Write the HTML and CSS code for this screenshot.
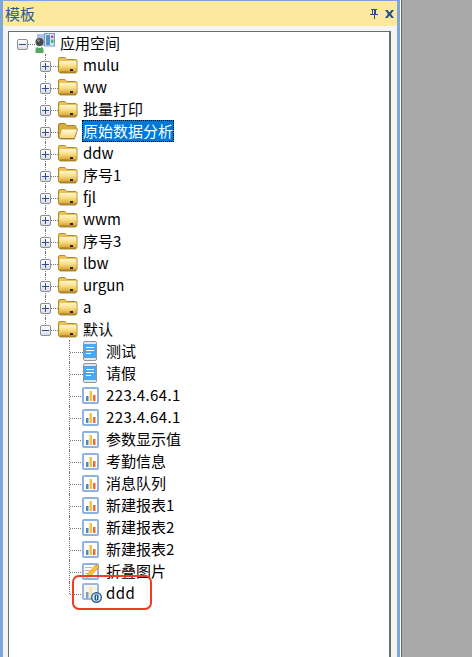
FILE: index.html
```html
<!DOCTYPE html>
<html lang="zh">
<head>
  <title>模板</title>
  <meta charset="utf-8">
  <link rel="stylesheet" href="styles.css">
</head>
<body>

<svg class="defs" width="0" height="0">
  <defs>
    <linearGradient id="gold" x1="0" y1="0" x2="0" y2="1">
      <stop offset="0" stop-color="#fff7cf"/>
      <stop offset="0.45" stop-color="#f9de85"/>
      <stop offset="1" stop-color="#d9a234"/>
    </linearGradient>
    <linearGradient id="goldopen" x1="0" y1="0" x2="0" y2="1">
      <stop offset="0" stop-color="#fffbe2"/>
      <stop offset="1" stop-color="#f6d677"/>
    </linearGradient>
    <symbol id="folder" viewBox="0 0 20 17">
      <path d="M0.500 14V2q0-1.500 1.500-1.500h5l2 2h8.500q1.500 0 1.500 1.500v10q0 1.500-1.500 1.500H2q-1.500 0-1.500-1.500z" fill="#e8c25a" stroke="#b58a22"/>
      <rect x="1.500" y="4" width="17" height="11" rx="1" fill="url(#gold)"/>
      <rect x="1.500" y="14.500" width="17" height="1" fill="#a97d1c"/>
      <rect x="12" y="12" width="3" height="2" fill="#2e2408"/>
      <rect x="2" y="16" width="16" height="1" fill="#c8c8c8"/>
    </symbol>
    <symbol id="folderopen" viewBox="0 0 20 17">
      <path d="M0.500 15V2q0-1.500 1.500-1.500h5l2 2h7.500q1.500 0 1.500 1.500v2h1.500l-3 9.500H2z" fill="#d9ad3d" stroke="#a97d1c"/>
      <path d="M4 6.500h15L16 15H1.500z" fill="url(#goldopen)"/>
      <rect x="2" y="16" width="15" height="1" fill="#c8c8c8"/>
    </symbol>
    <symbol id="workspace" viewBox="0 0 20 20">
      <rect x="2" y="1" width="9" height="12" fill="#a9c3e6"/>
      <rect x="9.500" y="0.500" width="10" height="12.500" fill="#dbe5f2" stroke="#7f9ac0"/>
      <rect x="11" y="2" width="4" height="10" fill="#4f93c8"/>
      <rect x="16" y="2.500" width="2.500" height="2.500" fill="#d04a9a"/>
      <rect x="16" y="6.500" width="2.500" height="3.500" fill="#3fb56a"/>
      <circle cx="4.500" cy="9" r="4" fill="#4a4a4a"/>
      <circle cx="3.500" cy="7.500" r="1.300" fill="#9a9a9a"/>
      <path d="M0.500 20v-3q0-3 3-3h2q3 0 3 3v3z" fill="#58a95f"/>
      <rect x="3" y="13" width="3" height="2" fill="#dcebd4"/>
    </symbol>
    <symbol id="phone" viewBox="0 0 14 20">
      <rect x="0.500" y="0.500" width="13" height="19" rx="1.500" fill="#e3e6ea" stroke="#8d949c"/>
      <rect x="1" y="3" width="12" height="14" fill="#4aa8f0"/>
      <rect x="3" y="6" width="8" height="1" fill="#fff"/>
      <rect x="3" y="9" width="8" height="1" fill="#fff"/>
      <rect x="3" y="12" width="5" height="1" fill="#fff"/>
    </symbol>
    <symbol id="chart" viewBox="0 0 17 17">
      <rect x="1" y="1" width="15" height="15" rx="1" fill="#fff" stroke="#8fb2e6" stroke-width="2"/>
      <rect x="4" y="9" width="2.500" height="5" fill="#4f86c6"/>
      <rect x="7.500" y="4" width="2.500" height="10" fill="#f3c13a"/>
      <rect x="11" y="8" width="2.500" height="6" fill="#ea6a3a"/>
    </symbol>
    <symbol id="pencil" viewBox="0 0 17 17">
      <rect x="1" y="1" width="15" height="15" rx="1" fill="#fff" stroke="#8fb2e6" stroke-width="2"/>
      <rect x="3" y="4" width="7" height="1" fill="#b8b8b8"/>
      <rect x="3" y="7" width="5" height="1" fill="#b8b8b8"/>
      <rect x="3" y="10" width="3" height="1" fill="#b8b8b8"/>
      <path d="M4 15l1.500-4L14 1.500 17 4l-8.500 9z" fill="#f6c22e" stroke="#d98a1c" stroke-width="0.700"/>
      <path d="M4 15l1.500-4 3 2z" fill="#f0dcb4"/>
    </symbol>
    <symbol id="chartbadge" viewBox="0 0 20 20">
      <rect x="1" y="1" width="15" height="15" rx="1" fill="#f4f4f0" stroke="#9db6da" stroke-width="2"/>
      <rect x="4" y="9" width="2.500" height="6" fill="#7f9cc4"/>
      <rect x="7.500" y="4" width="2.500" height="11" fill="#f6e6a0"/>
      <circle cx="14.500" cy="14.500" r="4.800" fill="#e8f0f8" stroke="#2f5f8f" stroke-width="1.400"/>
      <rect x="12.500" y="11.500" width="4" height="6" rx="1" fill="#1c5a96"/>
      <rect x="14" y="12.500" width="1" height="4" fill="#d8e8f8"/>
    </symbol>
  </defs>
</svg>

<div class="panel">
  <div class="titlebar">
    <span class="titlebar-text">模板</span>
    <svg class="pin" width="8" height="10" viewBox="0 0 8 10">
      <path d="M1 0h6v1H6v4h2v1H5v4H4V6H0V5h2V1H1zM3 1v4h1V1z" fill="#1f4f96"/>
    </svg>
    <svg class="close" width="9" height="8" viewBox="0 0 9 8">
      <path d="M0 0h2.500L4.500 2.500 6.500 0H9L6 4l3 4H6.500l-2-2.500L2.500 8H0l3-4z" fill="#1f4f96"/>
    </svg>
  </div>

  <div class="frame">
    <ul class="tree">
      <li class="root">
        <div class="row">
          <span class="box minus"></span>
          <svg class="icon big"><use href="#workspace"/></svg>
          <span class="label">应用空间</span>
        </div>
        <ul class="branch">
          <li><div class="row"><span class="box plus"></span><svg class="icon folder"><use href="#folder"/></svg><span class="label">mulu</span></div></li>
          <li><div class="row"><span class="box plus"></span><svg class="icon folder"><use href="#folder"/></svg><span class="label">ww</span></div></li>
          <li><div class="row"><span class="box plus"></span><svg class="icon folder"><use href="#folder"/></svg><span class="label">批量打印</span></div></li>
          <li><div class="row"><span class="box plus"></span><svg class="icon folder"><use href="#folderopen"/></svg><span class="label selected">原始数据分析</span></div></li>
          <li><div class="row"><span class="box plus"></span><svg class="icon folder"><use href="#folder"/></svg><span class="label">ddw</span></div></li>
          <li><div class="row"><span class="box plus"></span><svg class="icon folder"><use href="#folder"/></svg><span class="label">序号1</span></div></li>
          <li><div class="row"><span class="box plus"></span><svg class="icon folder"><use href="#folder"/></svg><span class="label">fjl</span></div></li>
          <li><div class="row"><span class="box plus"></span><svg class="icon folder"><use href="#folder"/></svg><span class="label">wwm</span></div></li>
          <li><div class="row"><span class="box plus"></span><svg class="icon folder"><use href="#folder"/></svg><span class="label">序号3</span></div></li>
          <li><div class="row"><span class="box plus"></span><svg class="icon folder"><use href="#folder"/></svg><span class="label">lbw</span></div></li>
          <li><div class="row"><span class="box plus"></span><svg class="icon folder"><use href="#folder"/></svg><span class="label">urgun</span></div></li>
          <li><div class="row"><span class="box plus"></span><svg class="icon folder"><use href="#folder"/></svg><span class="label">a</span></div></li>
          <li>
            <div class="row"><span class="box minus"></span><svg class="icon folder"><use href="#folder"/></svg><span class="label">默认</span></div>
            <ul class="branch leaves">
              <li><div class="row"><svg class="icon phone"><use href="#phone"/></svg><span class="label">测试</span></div></li>
              <li><div class="row"><svg class="icon phone"><use href="#phone"/></svg><span class="label">请假</span></div></li>
              <li><div class="row"><svg class="icon chart"><use href="#chart"/></svg><span class="label wide">223.4.64.1</span></div></li>
              <li><div class="row"><svg class="icon chart"><use href="#chart"/></svg><span class="label wide">223.4.64.1</span></div></li>
              <li><div class="row"><svg class="icon chart"><use href="#chart"/></svg><span class="label">参数显示值</span></div></li>
              <li><div class="row"><svg class="icon chart"><use href="#chart"/></svg><span class="label">考勤信息</span></div></li>
              <li><div class="row"><svg class="icon chart"><use href="#chart"/></svg><span class="label">消息队列</span></div></li>
              <li><div class="row"><svg class="icon chart"><use href="#chart"/></svg><span class="label">新建报表1</span></div></li>
              <li><div class="row"><svg class="icon chart"><use href="#chart"/></svg><span class="label">新建报表2</span></div></li>
              <li><div class="row"><svg class="icon chart"><use href="#chart"/></svg><span class="label">新建报表2</span></div></li>
              <li><div class="row"><svg class="icon chart"><use href="#pencil"/></svg><span class="label">折叠图片</span></div></li>
              <li><div class="row"><svg class="icon badge"><use href="#chartbadge"/></svg><span class="label wide">ddd</span></div><span class="callout"></span></li>
            </ul>
          </li>
        </ul>
      </li>
    </ul>
  </div>
</div>

</body>
</html>
```

FILE: styles.css
```css
html, body {
    height: 100%;
}

body {
    margin: 0;
    background: #a9a9a9;
    color: #000;
    font-family: "Noto Sans CJK SC", "Noto Sans", sans-serif;
    font-size: 15px;
    overflow: hidden;
}

ul {
    list-style: none;
    margin: 0;
    padding: 0;
}

.defs {
    position: absolute;
}

.panel {
    width: 400px;
    height: 100%;
    box-sizing: border-box;
    display: flex;
    flex-direction: column;
    background: #f4f4f4;
    border-left: 3px solid #7ea6dc;
    border-right: 3px solid #7ea6dc;
    border-top: 1px solid #7ea6dc;
    box-shadow: 1px 0 0 #fff, 2px 0 0 #666;
}

.titlebar {
    height: 25px;
    flex: none;
    display: flex;
    align-items: center;
    gap: 7px;
    padding: 0 3px 0 2px;
    background: #fde99d;
    color: #1f5a96;
}

.titlebar-text {
    font-size: 15px;
    margin-right: auto;
}

.frame {
    flex: 1;
    margin: 5px 6px 0 5px;
    background: #fff;
    border: solid #6b6b6b;
    border-width: 1px 2px 0 1px;
    padding: 0 0 0 8px;
    position: relative;
}

.row {
    height: 22px;
    display: flex;
    align-items: center;
}

.box {
    width: 11px;
    height: 11px;
    box-sizing: border-box;
    flex: none;
    margin: 2px 7px 0 0;
    border: 1px solid #8a8f96;
    border-radius: 2px;
    background: linear-gradient(#fff, #d9dde3);
    position: relative;
    z-index: 1;
}

.box::before {
    content: "";
    position: absolute;
    left: 1px;
    top: 4px;
    width: 7px;
    height: 1px;
    background: #2f4f8f;
}

.plus::after {
    content: "";
    position: absolute;
    left: 4px;
    top: 1px;
    width: 1px;
    height: 7px;
    background: #2f4f8f;
}

.icon {
    flex: none;
    display: block;
    position: relative;
    z-index: 1;
}

.big {
    width: 20px;
    height: 20px;
    margin-right: 4px;
}

.folder {
    width: 20px;
    height: 17px;
    margin-right: 4px;
}

.phone {
    width: 14px;
    height: 20px;
    margin: 0 8px 0 19px;
}

.chart {
    width: 17px;
    height: 17px;
    margin: 0 6px 0 18px;
}

.badge {
    width: 20px;
    height: 20px;
    margin: 0 3px 0 18px;
}

.label {
    line-height: 20px;
    border: 1px dotted transparent;
    white-space: nowrap;
}

.wide {
    letter-spacing: 0.4px;
}

.selected {
    background: #0078d7;
    color: #fff;
    border-color: #e08a20;
    outline: 1px dotted #000;
    outline-offset: -1px;
}

.branch {
    padding-left: 23px;
}

.leaves {
    padding-left: 24px;
}

.branch > li {
    position: relative;
}

/* connector lines */
.branch > li::before {
    content: "";
    position: absolute;
    left: 5px;
    top: 0;
    bottom: 0;
    border-left: 1px dotted #777;
}

.branch > li:last-child::before {
    bottom: auto;
    height: 12px;
}

.branch > li::after {
    content: "";
    position: absolute;
    left: 6px;
    top: 12px;
    width: 12px;
    border-top: 1px dotted #777;
}

.leaves > li::after {
    width: 13px;
}

.root {
    position: relative;
}

.root::before {
    content: "";
    position: absolute;
    left: 11px;
    top: 12px;
    width: 7px;
    border-top: 1px dotted #777;
}

.callout {
    position: absolute;
    left: 8px;
    top: -7px;
    width: 80px;
    height: 35px;
    box-sizing: border-box;
    border: 2px solid #ee3d24;
    border-radius: 7px;
    z-index: 2;
}
```
